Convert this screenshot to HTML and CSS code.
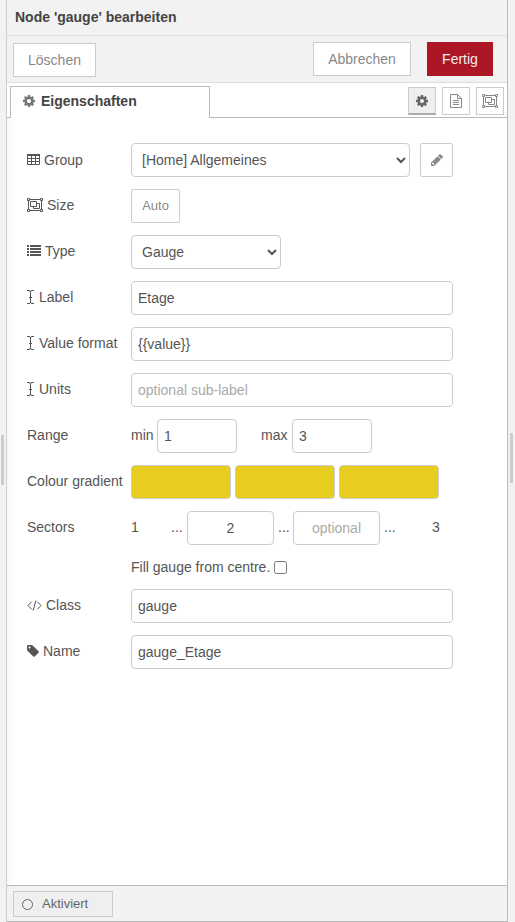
FILE: index.html
```html
<!DOCTYPE html>
<html lang="de">
<head>
<meta charset="utf-8">
<title>Node 'gauge' bearbeiten</title>
<link rel="stylesheet" href="styles.css">
</head>
<body>
<svg class="defs" aria-hidden="true">
  <symbol id="cog" viewBox="128 128 1536 1536"><path d="M1152 896q0-106-75-181t-181-75-181 75-75 181 75 181 181 75 181-75 75-181zm512-109v222q0 12-8 23t-20 13l-185 28q-19 54-39 91 35 50 107 138 10 12 10 25t-9 23q-27 37-99 108t-94 71q-12 0-26-9l-138-108q-44 23-91 38-16 136-29 186-7 28-36 28h-222q-14 0-24.5-8.5t-11.5-21.5l-28-184q-49-16-90-37l-141 107q-10 9-25 9-14 0-25-11-126-114-165-168-7-10-7-23 0-12 8-23 15-21 51-66.5t54-70.5q-27-50-41-99l-183-27q-13-2-21-12.5t-8-23.5v-222q0-12 8-23t19-13l186-28q14-46 39-92-40-57-107-138-10-12-10-24 0-10 9-23 26-36 98.5-107.5t94.5-71.5q13 0 26 10l138 107q44-23 91-38 16-136 29-186 7-28 36-28h222q14 0 24.5 8.5t11.5 21.5l28 184q49 16 90 37l142-107q9-9 24-9 13 0 25 10 129 119 165 170 7 8 7 22 0 12-8 23-15 21-51 66.5t-54 70.5q26 50 41 98l183 28q13 2 21 12.5t8 23.5z"/></symbol>
  <symbol id="pencil" viewBox="128 128 1536 1536"><path d="M491 1536l91-91-235-235-91 91v107h128v128h107zm469-1120l416 416-832 832h-416v-416zm683 96q0 53-37 90l-166 166-416-416 166-165q36-38 90-38 53 0 91 38l235 234q37 39 37 91z"/></symbol>
  <symbol id="tag" viewBox="128 128 1536 1536"><path d="M576 448q0-53-37.5-90.5t-90.5-37.5-90.5 37.5-37.5 90.5 37.5 90.5 90.5 37.5 90.5-37.5 37.5-90.5zm1067 576q0 53-37 90l-491 492q-39 37-91 37-53 0-90-37l-715-716q-38-37-64.5-101t-26.5-117v-416q0-52 38-90t90-38h416q53 0 117 26.5t102 64.5l715 714q37 39 37 91z"/></symbol>
  <symbol id="object-group" viewBox="0 0 16 14"><path fill="none" stroke="currentColor" d="M2.5 1.5h11M2.5 12.5h11M1.500 2.500v9M14.500 2.500v9M.5.5h2v2h-2zM13.500.5h2v2h-2zM.5 11.500h2v2h-2zM13.500 11.500h2v2h-2zM3.500 3.500h6v5h-6zM9.500 5.500h3v5h-6v-2"/></symbol>
  <symbol id="table" viewBox="0 0 13 12"><path fill="none" stroke="currentColor" d="M.5 1.500h12v10H.5zM0 5.500h13M0 8.500h13M4.500 2v9M8.500 2v9"/><path d="M0 1h13v2H0z"/></symbol>
  <symbol id="list" viewBox="0 0 14 12"><path d="M0 1h2v2H0zM3 1h11v2H3zM0 4h2v2H0zM3 4h11v2H3zM0 7h2v2H0zM3 7h11v2H3zM0 10h2v2H0zM3 10h11v2H3z"/></symbol>
  <symbol id="cursor" viewBox="0 0 7 14"><path fill="none" stroke="currentColor" d="M0 .5h2q1.500 0 1.500 1.500Q3.500.5 5 .5h2M0 13.500h2q1.500 0 1.500-1.500 0 1.500 1.500 1.500h2M3.500 1.500v11M2 7.500h3"/></symbol>
  <symbol id="code" viewBox="0 0 15 12"><path fill="none" stroke="currentColor" d="M4.700 2.700.9 6.500l3.800 3.800M10.300 2.700 14.100 6.500l-3.800 3.800M8.900 1.500 6.100 11.500"/></symbol>
  <symbol id="file" viewBox="0 0 12 14"><path fill="none" stroke="currentColor" d="M.5.5h7l4 4v9H.5zM7.500.5v4h4M3 6.500h6M3 8.500h6M3 10.500h6"/></symbol>
</svg>
<div class="tray">
  <header class="title">Node 'gauge' bearbeiten</header>
  <div class="toolbar">
    <button class="btn delete">Löschen</button>
    <button class="btn cancel">Abbrechen</button>
    <button class="btn primary">Fertig</button>
  </div>
  <nav class="tabs">
    <div class="tab"><svg class="i12"><use href="#cog"/></svg>Eigenschaften</div>
    <div class="tab-buttons">
      <button class="icon-btn selected"><svg class="i12"><use href="#cog"/></svg></button>
      <button class="icon-btn"><svg class="i-file"><use href="#file"/></svg></button>
      <button class="icon-btn"><svg class="i-group"><use href="#object-group"/></svg></button>
    </div>
  </nav>
  <main class="form">
    <div class="row first"><label><svg class="i-table"><use href="#table"/></svg>Group</label>
      <select class="group-select"><option>[Home] Allgemeines</option></select>
      <button class="box pencil"><svg class="i12"><use href="#pencil"/></svg></button></div>
    <div class="row"><label><svg class="i-group"><use href="#object-group"/></svg>Size</label><button class="box auto">Auto</button></div>
    <div class="row"><label><svg class="i-list"><use href="#list"/></svg>Type</label><select class="type-select"><option>Gauge</option></select></div>
    <div class="row"><label><svg class="i-cursor"><use href="#cursor"/></svg>Label</label><input class="wide" type="text" value="Etage"></div>
    <div class="row"><label><svg class="i-cursor"><use href="#cursor"/></svg>Value format</label><input class="wide" type="text" value="{{value}}"></div>
    <div class="row"><label><svg class="i-cursor"><use href="#cursor"/></svg>Units</label><input class="wide" type="text" placeholder="optional sub-label"></div>
    <div class="row"><label>Range</label><span class="min">min</span><input class="num" type="text" value="1"><span class="max">max</span><input class="num" type="text" value="3"></div>
    <div class="row colours"><label>Colour gradient</label><span class="swatch"></span><span class="swatch"></span><span class="swatch"></span></div>
    <div class="row sectors"><label>Sectors</label><span class="low">1</span><span class="dots">...</span><input type="text" value="2"><span class="dots mid">...</span><input type="text" placeholder="optional"><span class="dots last">...</span><span>3</span></div>
    <div class="row fill"><label></label><span>Fill gauge from centre.</span><input type="checkbox"></div>
    <div class="row"><label><svg class="i-code"><use href="#code"/></svg>Class</label><input class="wide" type="text" value="gauge"></div>
    <div class="row"><label><svg class="i12"><use href="#tag"/></svg>Name</label><input class="wide" type="text" value="gauge_Etage"></div>
  </main>
  <footer class="footer"><button class="state"><span class="circle"></span>Aktiviert</button></footer>
</div>
<div class="gutter"></div>
<span class="grip left"></span>
<span class="grip right"></span>
</body>
</html>
```
FILE: styles.css
```css
* { box-sizing: border-box; }
body {
  margin: 0;
  height: 922px;
  display: flex;
  padding-left: 6px;
  position: relative;
  overflow: hidden;
  background: #f2f2f2;
  color: #555;
  font: 14px/20px "Liberation Sans", Arial, sans-serif;
}
.defs { position: absolute; width: 0; height: 0; }
svg { display: block; flex: none; fill: currentColor; }
button, input, select { font: inherit; color: inherit; margin: 0; }
.tray {
  width: 502px;
  height: 922px;
  display: flex;
  flex-direction: column;
  border: solid #bbb;
  border-width: 0 1px 1px;
  border-left-color: #ccc;
}
.gutter { flex: 1; }
.title {
  height: 36px;
  padding: 7px 8px;
  border-bottom: 1px solid #ddd;
  color: #444;
  font-weight: bold;
}
.toolbar {
  height: 47px;
  display: flex;
  align-items: flex-start;
  padding: 6px 14px 0 6px;
  border-bottom: 1px solid #ddd;
}
.btn {
  height: 34px;
  padding: 0;
  border: 1px solid #ccc;
  background: #fff;
  color: #888;
}
.delete { width: 83px; margin: 1px auto 0 0; }
.cancel { width: 98px; margin-right: 16px; }
.primary { width: 66px; border-color: #ad1625; background: #ad1625; color: #eee; }
.tabs {
  height: 35px;
  display: flex;
  align-items: flex-start;
  justify-content: space-between;
  padding: 3px 3px 0;
  background: linear-gradient(#bbb, #bbb) bottom / 100% 1px no-repeat, #fff;
}
.tab {
  width: 200px;
  height: 32px;
  display: flex;
  align-items: center;
  gap: 6px;
  padding: 0 12px 3px;
  border: 1px solid #bbb;
  border-bottom: 0;
  background: #fff;
  color: #444;
  font-weight: bold;
}
.tab svg { color: #777; }
.tab-buttons { display: flex; gap: 6px; padding-top: 1px; }
.icon-btn {
  width: 28px;
  height: 28px;
  display: flex;
  align-items: center;
  justify-content: center;
  padding: 0;
  border: 1px solid #ccc;
  background: #fff;
  color: #888;
}
.selected { background: #efefef; border-bottom: 2px solid #aaa; color: #666; }
.i12 { width: 12px; height: 12px; }
.i-file { width: 12px; height: 14px; }
.i-group { width: 16px; height: 14px; }
.i-table { width: 13px; height: 12px; margin-bottom: 2px; }
.i-list { width: 14px; height: 12px; margin-bottom: 2px; }
.i-cursor { width: 7px; height: 14px; margin-right: 1px; }
.i-code { width: 15px; height: 12px; }
.form {
  flex: 1;
  padding: 25px 20px 0;
  background: linear-gradient(90deg, #f8f8f8, #fff 7px);
}
.row { height: 34px; display: flex; align-items: center; margin-bottom: 12px; }
.row label {
  width: 104px;
  flex: none;
  display: flex;
  align-items: center;
  gap: 4px;
  padding-bottom: 2px;
  white-space: nowrap;
}
.first label { padding-bottom: 0; }
.row select, .row input[type="text"] {
  height: 34px;
  border: 1px solid #ccc;
  border-radius: 4px;
  background: #fff;
  padding: 4px 6px;
}
.row .group-select { width: 279px; margin-right: 10px; }
.type-select { width: 150px; }
.row .wide { width: 322px; }
.row input::placeholder { color: #aaa; opacity: 1; }
.box {
  height: 34px;
  display: flex;
  align-items: center;
  justify-content: center;
  padding: 0;
  border: 1px solid #ccc;
  border-radius: 2px;
  background: #fff;
  color: #888;
}
.pencil { width: 33px; }
.auto { width: 49px; font-size: 13px; }
.row > span:not(.swatch) { padding-bottom: 2px; }
.min { width: 26px; }
.max { width: 31px; margin-left: 24px; }
.row .num { width: 80px; }
.colours { gap: 4px; }
.colours label { width: 100px; }
.swatch { width: 100px; height: 34px; border: 1px solid #ccc; border-radius: 4px; background: #e7cd1d; }
.low { width: 40px; }
.dots { width: 16px; }
.sectors .mid { width: 19px; padding-left: 4px; }
.sectors .last { width: 52px; padding-left: 4px; }
.sectors input { width: 87px; text-align: center; }
.fill { height: 20px; }
.row.fill > span { padding: 0; }
.fill input { width: 13px; height: 13px; margin-left: 4px; }
.footer { height: 36px; padding: 5px 6px; border-top: 1px solid #bbb; }
.state {
  width: 100px;
  height: 26px;
  display: flex;
  align-items: center;
  gap: 9px;
  padding: 0 8px;
  border: 1px solid #ccc;
  background: #efefef;
  color: #666;
  font-size: 13px;
}
.circle { width: 11px; height: 11px; border: 1px solid #666; border-radius: 50%; }
.grip { position: absolute; width: 3px; height: 50px; background: #ccc; }
.grip.left { left: 1px; top: 435px; }
.grip.right { left: 510px; top: 433px; }
```
